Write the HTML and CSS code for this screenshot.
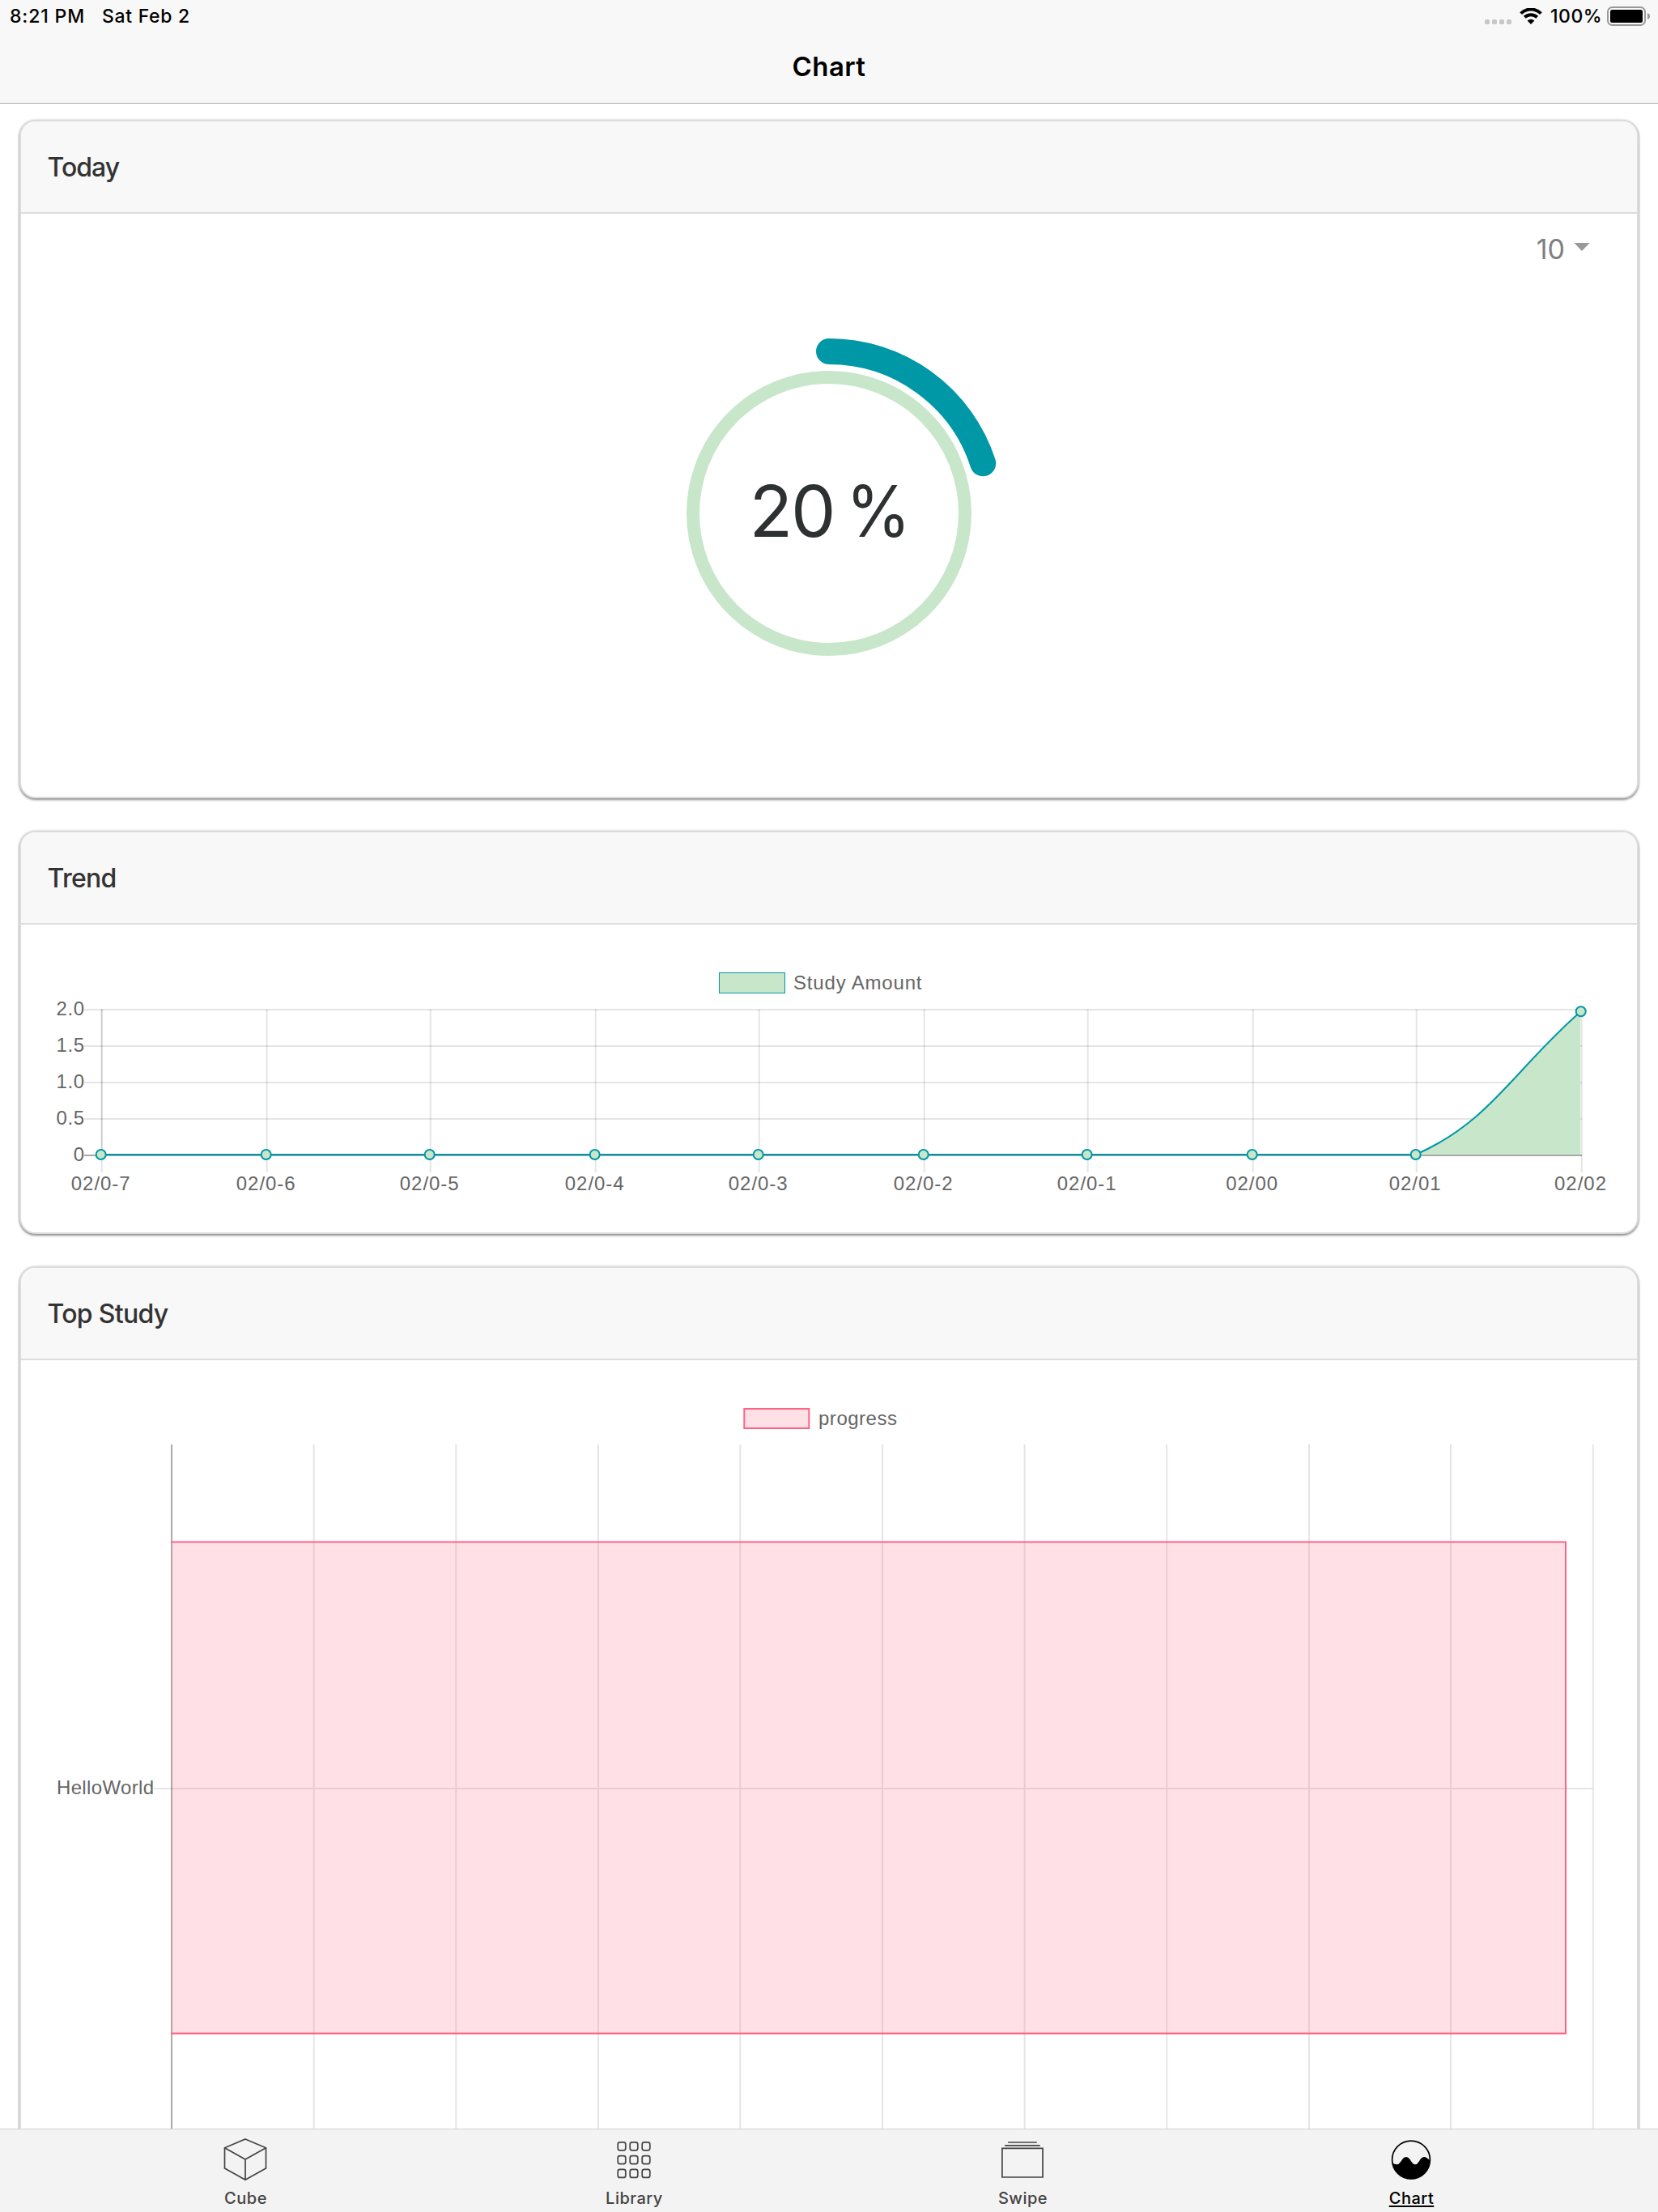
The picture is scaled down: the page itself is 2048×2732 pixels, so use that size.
FILE: index.html
```html
<!DOCTYPE html>
<html lang="en">
<head>
<meta charset="utf-8">
<title>Chart</title>
<link rel="stylesheet" href="styles.css">
</head>
<body>
<div class="screen">
  <header class="topbar">
    <div class="status">
      <span class="time">8:21 PM</span>
      <span class="date">Sat Feb 2</span>
      <svg class="signal" width="34" height="6" viewBox="0 0 34 6"><rect width="6" height="6" rx="1.8"/><rect x="9" width="6" height="6" rx="1.8"/><rect x="18" width="6" height="6" rx="1.8"/><rect x="27" width="6" height="6" rx="1.8"/></svg>
      <svg class="wifi" width="28" height="20" viewBox="0 0 28 20"><path d="M1.6 6.6A17.6 17.6 0 0 1 26.4 6.6M6.3 11.3A11 11 0 0 1 21.7 11.3"/><path class="dot" d="M14 20 9.6 15.6A6.4 6.4 0 0 1 18.4 15.6Z"/></svg>
      <span class="percent">100%</span>
      <svg class="battery" width="54" height="24" viewBox="0 0 54 24"><rect class="case" x="1" y="1" width="46" height="22" rx="5.5"/><rect x="4" y="4" width="40" height="16" rx="2.5"/><path class="nub" d="M50 8C52 8.7 53 10 53 12S52 15.3 50 16Z"/></svg>
    </div>
    <h1 class="title">Chart</h1>
  </header>

  <main class="content">
    <section class="card today">
      <h2 class="card-head"><span class="t-today">Today</span></h2>
      <div class="picker"><span>10</span><svg width="20" height="10" viewBox="0 0 20 10"><path d="M.4 0H19.6L10 10Z"/></svg></div>
      <svg class="ring" width="440" height="440" viewBox="0 0 440 440">
        <circle class="track" cx="220" cy="220" r="168"/>
        <path class="progress" d="M220 20A200 200 0 0 1 410.2 158.2"/>
        <text x="121.5" y="249" textLength="107" lengthAdjust="spacing">20</text>
        <text x="241" y="249" textLength="80" lengthAdjust="spacingAndGlyphs">%</text>
      </svg>
    </section>

    <section class="card trend">
      <h2 class="card-head"><span class="t-trend">Trend</span></h2>
      <svg class="chart" width="1996" height="380" viewBox="26 1142 1996 380">
        <rect class="series-a" x="888.5" y="1201.5" width="81" height="25"/>
        <text x="980" y="1222" textLength="158.5">Study Amount</text>
        <path class="grid" d="M104 1247H1954M104 1292H1954M104 1337H1954M104 1382H1954"/>
        <path class="zero" d="M104 1427H1954"/>
        <path class="grid" d="M125.7 1246V1448M125.7 1246V1426M329.7 1246V1448M531.7 1246V1448M735.7 1246V1448M937.7 1246V1448M1141.7 1246V1448M1343.7 1246V1448M1547.7 1246V1448M1749.7 1246V1448M1953.7 1246V1448"/>
        <path class="grid" d="M125.7 1246V1426"/>
        <path class="area" d="M1748.7 1426C1841 1385.6 1871 1320 1952.3 1249.3V1426Z"/>
        <path class="line" d="M124.7 1426H1748.7C1841 1385.6 1871 1320 1952.7 1249.3"/>
        <g class="points">
          <circle cx="124.7" cy="1426" r="6"/><circle cx="328.7" cy="1426" r="6"/><circle cx="530.7" cy="1426" r="6"/><circle cx="734.7" cy="1426" r="6"/><circle cx="936.7" cy="1426" r="6"/><circle cx="1140.7" cy="1426" r="6"/><circle cx="1342.7" cy="1426" r="6"/><circle cx="1546.7" cy="1426" r="6"/><circle cx="1748.7" cy="1426" r="6"/><circle cx="1952.7" cy="1249.3" r="6"/>
        </g>
        <g class="end">
          <text x="104" y="1254" textLength="34.5">2.0</text><text x="104" y="1299" textLength="34.5">1.5</text><text x="104" y="1344" textLength="34.5">1.0</text><text x="104" y="1389" textLength="34.5">0.5</text><text x="104" y="1434">0</text>
        </g>
        <g class="mid">
          <text x="124.2" y="1470" textLength="73">02/0-7</text><text x="328.2" y="1470" textLength="73">02/0-6</text><text x="530.2" y="1470" textLength="73">02/0-5</text><text x="734.2" y="1470" textLength="73">02/0-4</text><text x="936.2" y="1470" textLength="73">02/0-3</text><text x="1140.2" y="1470" textLength="73">02/0-2</text><text x="1342.2" y="1470" textLength="73">02/0-1</text><text x="1546.2" y="1470" textLength="64">02/00</text><text x="1747.7" y="1470" textLength="64">02/01</text><text x="1952" y="1470" textLength="64">02/02</text>
        </g>
      </svg>
    </section>

    <section class="card study">
      <h2 class="card-head"><span class="t-study">Top Study</span></h2>
      <svg class="chart" width="1996" height="1052" viewBox="26 1680 1996 1052">
        <rect class="series-b" x="919.3" y="1740" width="80" height="24"/>
        <text x="1011" y="1760" textLength="97">progress</text>
        <path class="grid" d="M387.7 1784V2732M563.3 1784V2732M739 1784V2732M914.3 1784V2732M1090 1784V2732M1265.6 1784V2732M1441.2 1784V2732M1617 1784V2732M1792 1784V2732M1967.8 1784V2732M190 2209H1969"/>
        <path class="axis" d="M212 1784V2732"/>
        <rect class="bar-fill" x="212" y="1904.5" width="1722" height="607"/>
        <path class="bar-line" d="M211 1904.5H1934V2511.5H211"/>
        <g class="end"><text x="190" y="2216" textLength="120">HelloWorld</text></g>
      </svg>
    </section>
  </main>

  <nav class="tabs">
    <a class="tab">
      <svg width="60" height="60" viewBox="273.5 2637 60 60"><path d="M303.5 2642 329 2652.8V2678L303.5 2692.3 278 2678V2652.8ZM278 2652.8 303.5 2667 329 2652.8M303.5 2667V2692.3"/></svg>
      <span class="l-cube">Cube</span>
    </a>
    <a class="tab">
      <svg width="60" height="60" viewBox="753.5 2637 60 60"><rect x="763.7" y="2645.8" width="9.6" height="10" rx="2.5"/><rect x="778.7" y="2645.8" width="9.6" height="10" rx="2.5"/><rect x="793.7" y="2645.8" width="9.6" height="10" rx="2.5"/><rect x="763.7" y="2662.6" width="9.6" height="10" rx="2.5"/><rect x="778.7" y="2662.6" width="9.6" height="10" rx="2.5"/><rect x="793.7" y="2662.6" width="9.6" height="10" rx="2.5"/><rect x="763.7" y="2679.4" width="9.6" height="10" rx="2.5"/><rect x="778.7" y="2679.4" width="9.6" height="10" rx="2.5"/><rect x="793.7" y="2679.4" width="9.6" height="10" rx="2.5"/></svg>
      <span class="l-library">Library</span>
    </a>
    <a class="tab">
      <svg width="60" height="60" viewBox="1233.5 2637 60 60"><path d="M1245.6 2646H1281.2M1241.6 2649.8H1285.2M1238.4 2653.3H1288.5V2689H1238.4Z"/></svg>
      <span class="l-swipe">Swipe</span>
    </a>
    <a class="tab active">
      <svg width="60" height="60" viewBox="1713.5 2637 60 60"><circle cx="1743.5" cy="2667.5" r="23.4"/><path class="wave" d="M1720.5 2671.3C1722 2672.6 1724 2673.3 1726 2673.3C1731 2673.3 1732 2664 1737.3 2664C1743 2664 1743.500 2673.300 1748.700 2673.300C1753.500 2673.300 1754 2664 1759.700 2664C1762.500 2664 1764.500 2666.300 1766.700 2668.300A23.200 23.200 0 0 1 1720.500 2671.300Z"/></svg>
      <span class="l-chart">Chart</span>
    </a>
  </nav>
</div>
</body>
</html>
```

FILE: styles.css
```css
* { box-sizing: border-box; }
body { margin: 0; background: #fff; font-family: Inter, "Liberation Sans", sans-serif; }
svg { display: block; flex: none; }
.screen { width: 2048px; height: 2732px; overflow: hidden; display: flex; flex-direction: column; }

.topbar { height: 128px; flex: none; background: #f8f8f8; border-bottom: 1px solid #aaa; }
.status { height: 40px; display: flex; align-items: center; padding: 0 9px 0 12px; font-size: 23px; font-weight: 500; line-height: 40px; white-space: nowrap; }
.time { width: 114px; letter-spacing: .85px; }
.date { letter-spacing: .7px; margin-right: auto; }
.signal { fill: #c7c7c7; margin: 14px 9px 0 0; }
.wifi { fill: none; stroke: #000; stroke-width: 4; margin-right: 10px; }
.wifi .dot { fill: #000; stroke: none; }
.percent { width: 70px; letter-spacing: .5px; }
.battery .case { fill: none; stroke: #999; stroke-width: 2; }
.battery .nub { fill: #999; }
.title { margin: 0; font-size: 33px; font-weight: 600; line-height: 84px; text-align: center; letter-spacing: .4px; }

.content { flex: 1; min-height: 0; overflow: hidden; padding: 20px 24px 0; display: flex; flex-direction: column; gap: 40px; }
.card { flex: none; border: 2px solid #ddd; border-radius: 20px; background: #fff; box-shadow: 0 2px 3px rgba(0, 0, 0, .42), 0 0 3px rgba(0, 0, 0, .2); }
.today { height: 838px; display: flex; flex-direction: column; }
.trend { height: 498px; }
.study { height: 1300px; }
.card-head { margin: 0; height: 114px; flex: none; border-bottom: 2px solid #ddd; border-radius: 18px 18px 0 0; background: #f8f8f8; padding-left: 32.5px; font-size: 32px; font-weight: 500; line-height: 114px; color: #333; }
.t-today { letter-spacing: -1px; }
.t-trend { letter-spacing: -.7px; }
.t-study { letter-spacing: -.7px; }
.picker { height: 88px; display: flex; justify-content: flex-end; align-items: center; gap: 11px; padding-right: 58px; font-size: 34px; font-weight: 400; color: #808080; line-height: 42px; padding-bottom: 1px; }
.picker svg { fill: #999; margin-bottom: 6px; }
.ring { align-self: center; margin-top: 62px; }
.ring .track { fill: none; stroke: #c8e6c9; stroke-width: 16; }
.ring .progress { fill: none; stroke: #0097a7; stroke-width: 32; stroke-linecap: round; }
.ring text { font-size: 88px; font-weight: 400; fill: #2d3132; }

.chart text { font: 24px "Liberation Sans", Arial, sans-serif; fill: #666; }
.chart .end { text-anchor: end; }
.chart .mid { text-anchor: middle; }
.grid { fill: none; stroke: rgba(0, 0, 0, .1); stroke-width: 2; }
.zero { fill: none; stroke: rgba(0, 0, 0, .34); stroke-width: 2; }
.axis { fill: none; stroke: rgba(0, 0, 0, .42); stroke-width: 1.6; }
.series-a { fill: #c8e6c9; stroke: #0097a7; stroke-width: 1; }
.area { fill: #c8e6c9; }
.line { fill: none; stroke: #0097a7; stroke-width: 2; }
.points { fill: #c8e6c9; stroke: #0097a7; stroke-width: 2; }
.series-b { fill: #ffe0e6; stroke: #ff6384; stroke-width: 2; }
.bar-fill { fill: rgba(255, 99, 132, .2); }
.bar-line { fill: none; stroke: #ff6384; stroke-width: 2; }

.tabs { height: 103px; flex: none; background: #f3f3f3; border-top: 1px solid #d2d2d2; display: flex; padding: 7px 0 0 63px; }
.tab { width: 480px; display: flex; flex-direction: column; align-items: center; font-size: 20px; font-weight: 500; line-height: 24px; color: #444; }
.tab svg { fill: none; stroke: #444; stroke-width: 1.7; margin-bottom: 6px; }
.tab span { letter-spacing: .5px; padding-left: 1px; }
.active { color: #000; }
.active svg { stroke: #000; }
.active .wave { fill: #000; stroke: none; }
.active span { text-decoration: underline; text-decoration-thickness: 1.5px; text-underline-offset: 2px; }
```
